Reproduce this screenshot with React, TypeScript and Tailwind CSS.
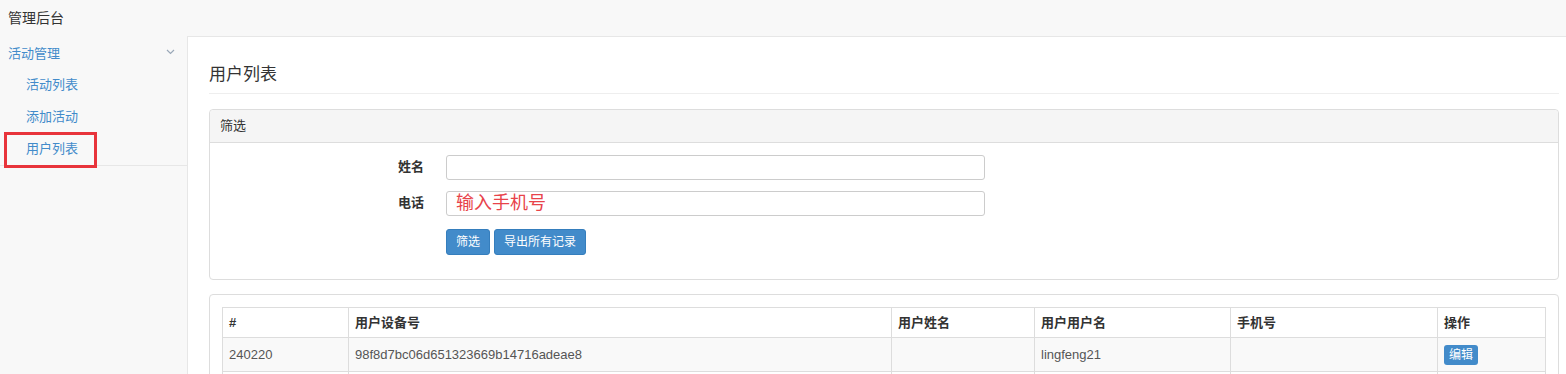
import React from "react";

const font = { fontFamily: '"Liberation Sans", "Noto Sans CJK SC", sans-serif' };

const columns = [
  { key: "id", label: "#", width: "w-[126px]" },
  { key: "device", label: "用户设备号", width: "w-[543px]" },
  { key: "name", label: "用户姓名", width: "w-[143px]" },
  { key: "username", label: "用户用户名", width: "w-[196px]" },
  { key: "phone", label: "手机号", width: "w-[207px]" },
  { key: "op", label: "操作", width: "" },
];

const rows = [
  { id: "240220", device: "98f8d7bc06d651323669b14716adeae8", name: "", username: "lingfeng21", phone: "" },
  { id: "", device: "", name: "", username: "", phone: "" },
];

export default function App() {
  return (
    <div className="min-h-[374px] h-[374px] overflow-hidden bg-[#f8f8f8] text-[#333] text-[13px]" style={font}>
      {/* Top bar */}
      <div className="h-[36px] flex items-center px-2 text-[14px] text-[#333]">管理后台</div>

      <div className="flex">
        {/* Sidebar */}
        <aside className="w-[187px] flex-shrink-0 pt-[1px]">
          <div className="border-b border-[#e7e7e7]">
            <div className="h-[32px] flex items-center justify-between pl-2 pr-[12px] text-[#428bca] pt-[2px]">
              <span>活动管理</span>
              <svg width="9" height="6" viewBox="0 0 9 6" className="mb-[4px]">
                <path d="M1 1l3.5 3.5L8 1" fill="none" stroke="#9aa8b8" strokeWidth="1.2" />
              </svg>
            </div>
            <div className="h-[32px] flex items-center pl-[26px] text-[#428bca]">活动列表</div>
            <div className="h-[32px] flex items-center pl-[26px] text-[#428bca]">添加活动</div>
            <div className="h-[32px] flex items-center pl-[26px] text-[#428bca] relative">
              用户列表
              <div className="absolute left-[4px] top-[-1px] w-[93px] h-[36px] border-[3px] border-[#e8343b]" />
            </div>
          </div>
        </aside>

        {/* Main */}
        <main className="flex-1 bg-white border-l border-t border-[#e7e7e7] pl-[21px] pr-[7px] pt-[26px]">
          <h1 className="text-[17px] text-[#333] pb-[6px] border-b border-[#eee] h-[31px] flex items-center">用户列表</h1>

          {/* Filter panel */}
          <div className="mt-[15px] border border-[#ddd] rounded-[4px]">
            <div className="h-[33px] flex items-center px-[10px] bg-[#f5f5f5] border-b border-[#ddd] rounded-t-[4px]">筛选</div>
            <div className="pt-[11px] pb-[24px]">
              <div className="flex items-center h-[26px]">
                <label className="w-[214px] text-right font-bold">姓名</label>
                <input className="ml-[22px] w-[539px] h-[25px] border border-[#ccc] rounded-[3px] px-2" />
              </div>
              <div className="flex items-center h-[26px] mt-[10px]">
                <label className="w-[214px] text-right font-bold">电话</label>
                <input
                  placeholder="输入手机号"
                  className="ml-[22px] w-[539px] h-[25px] border border-[#ccc] rounded-[3px] px-[9px] text-[18px] placeholder:text-[#e8434a]"
                />
              </div>
              <div className="flex gap-[4px] ml-[236px] mt-[13px]">
                <button className="h-[26px] px-[9px] bg-[#428bca] border border-[#357ebd] rounded-[3px] text-white text-[12px]">筛选</button>
                <button className="h-[26px] px-[9px] bg-[#428bca] border border-[#357ebd] rounded-[3px] text-white text-[12px]">导出所有记录</button>
              </div>
            </div>
          </div>

          {/* Table panel */}
          <div className="mt-[14px] border border-[#ddd] rounded-[4px] p-[12px]">
            <table className="w-full border-collapse border border-[#ddd]">
              <thead>
                <tr className="h-[30px]">
                  {columns.map((c) => (
                    <th key={c.key} className={`${c.width} border border-[#ddd] text-left font-bold px-[6px]`}>{c.label}</th>
                  ))}
                </tr>
              </thead>
              <tbody>
                {rows.map((r, i) => (
                  <tr key={i} className={`h-[34px] ${i % 2 === 0 ? "bg-[#f9f9f9]" : "bg-white"}`}>
                    <td className="border border-[#ddd] px-[6px] text-[#555]">{r.id}</td>
                    <td className="border border-[#ddd] px-[6px] text-[#555]">{r.device}</td>
                    <td className="border border-[#ddd] px-[6px] text-[#555]">{r.name}</td>
                    <td className="border border-[#ddd] px-[6px] text-[#555]">{r.username}</td>
                    <td className="border border-[#ddd] px-[6px] text-[#555]">{r.phone}</td>
                    <td className="border border-[#ddd] px-[6px]">
                      {r.id && (
                        <button className="h-[20px] px-[5px] bg-[#428bca] rounded-[3px] text-white text-[12px] leading-none">编辑</button>
                      )}
                    </td>
                  </tr>
                ))}
              </tbody>
            </table>
          </div>
        </main>
      </div>
    </div>
  );
}
